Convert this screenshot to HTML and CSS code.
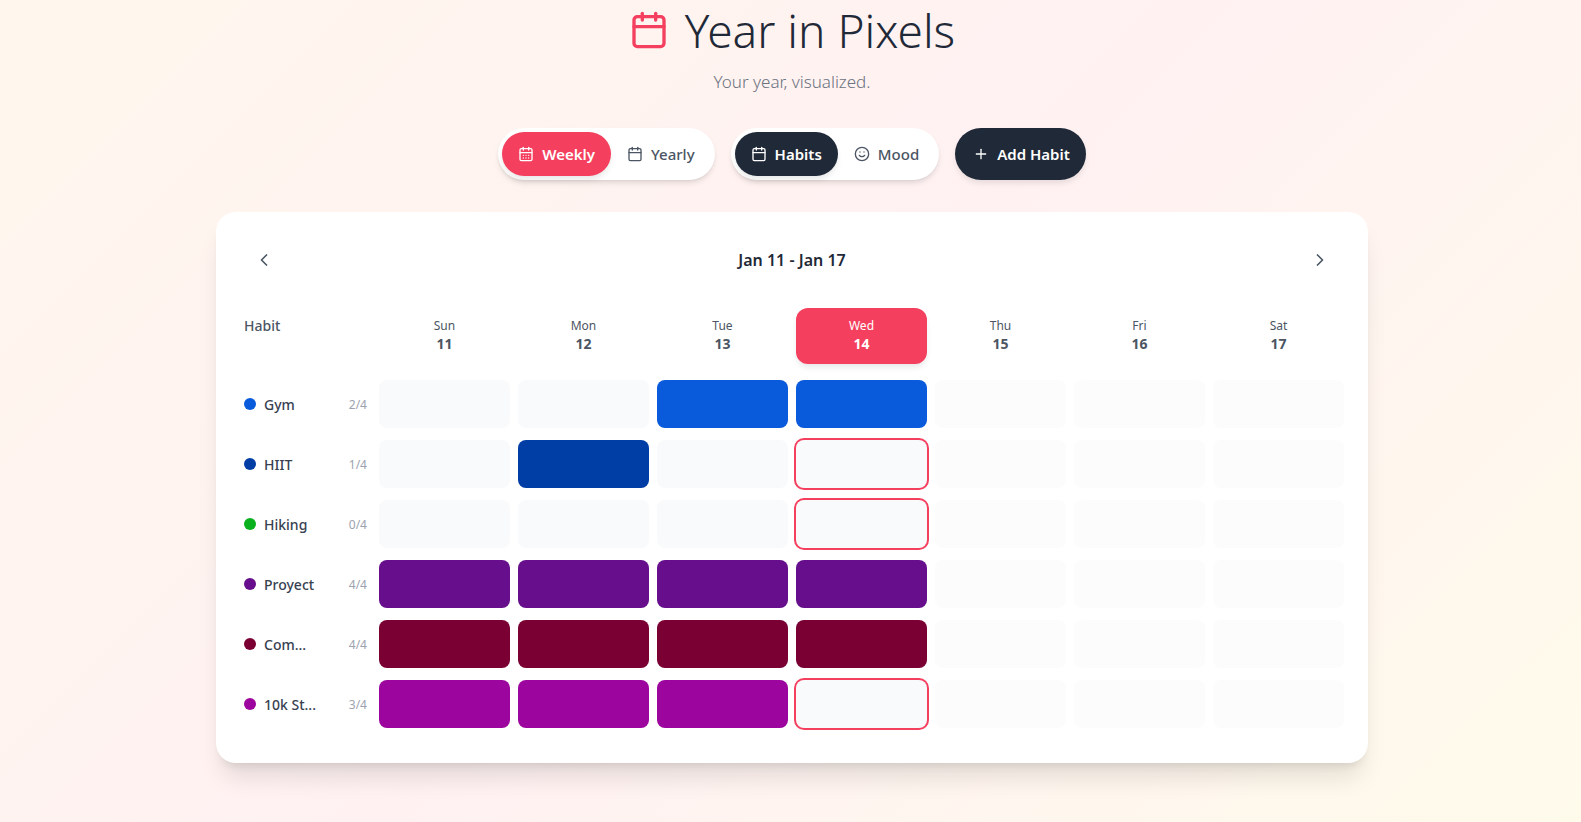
FILE: index.html
```html
<!DOCTYPE html>
<html>
<head>
    <title>Year in Pixels</title>
    <link rel="stylesheet" href="styles.css">
</head>
<body>
    <div class="container">
        <div class="header">
            <h1>
                <svg class="title-icon" viewBox="0 0 24 24"><path d="M8 2v4"/><path d="M16 2v4"/><rect x="3" y="4" width="18" height="18" rx="2"/><path d="M3 10h18"/></svg>
                Year in Pixels
            </h1>
            <p class="subtitle">Your year, visualized.</p>
        </div>

        <div class="controls">
            <div class="toggle">
                <button class="btn btn-rose">
                    <svg class="icon" viewBox="0 0 24 24"><path d="M8 2v4"/><path d="M16 2v4"/><rect x="3" y="4" width="18" height="18" rx="2"/><path d="M3 10h18"/><path d="M8 14h.01"/><path d="M12 14h.01"/><path d="M16 14h.01"/><path d="M8 18h.01"/><path d="M12 18h.01"/><path d="M16 18h.01"/></svg>
                    Weekly
                </button>
                <button class="btn">
                    <svg class="icon" viewBox="0 0 24 24"><path d="M8 2v4"/><path d="M16 2v4"/><rect x="3" y="4" width="18" height="18" rx="2"/><path d="M3 10h18"/></svg>
                    Yearly
                </button>
            </div>
            <div class="toggle">
                <button class="btn btn-dark">
                    <svg class="icon" viewBox="0 0 24 24"><path d="M8 2v4"/><path d="M16 2v4"/><rect x="3" y="4" width="18" height="18" rx="2"/><path d="M3 10h18"/></svg>
                    Habits
                </button>
                <button class="btn">
                    <svg class="icon" viewBox="0 0 24 24"><circle cx="12" cy="12" r="10"/><path d="M8 14s1.5 2 4 2 4-2 4-2"/><path d="M9 9h.01"/><path d="M15 9h.01"/></svg>
                    Mood
                </button>
            </div>
            <button class="add-btn">
                <svg class="icon" viewBox="0 0 24 24"><path d="M5 12h14"/><path d="M12 5v14"/></svg>
                Add Habit
            </button>
        </div>

        <div class="card">
            <div class="week-nav">
                <button class="nav-btn"><svg class="nav-icon" viewBox="0 0 24 24"><path d="m15 18-6-6 6-6"/></svg></button>
                <div class="week-label">Jan 11 - Jan 17</div>
                <button class="nav-btn"><svg class="nav-icon" viewBox="0 0 24 24"><path d="m9 18 6-6-6-6"/></svg></button>
            </div>

            <div class="week-table">
                <div class="row row-head">
                    <div class="habit-head">Habit</div>
                    <div class="day"><span>Sun</span><b>11</b></div>
                    <div class="day"><span>Mon</span><b>12</b></div>
                    <div class="day"><span>Tue</span><b>13</b></div>
                    <div class="day today"><span>Wed</span><b>14</b></div>
                    <div class="day"><span>Thu</span><b>15</b></div>
                    <div class="day"><span>Fri</span><b>16</b></div>
                    <div class="day"><span>Sat</span><b>17</b></div>
                </div>

                <div class="row">
                    <div class="habit"><i class="dot gym"></i><span class="name">Gym</span><span class="count">2/4</span></div>
                    <div class="cell"></div>
                    <div class="cell"></div>
                    <div class="cell gym"></div>
                    <div class="cell gym"></div>
                    <div class="cell future"></div>
                    <div class="cell future"></div>
                    <div class="cell future"></div>
                </div>
                <div class="row">
                    <div class="habit"><i class="dot hiit"></i><span class="name">HIIT</span><span class="count">1/4</span></div>
                    <div class="cell"></div>
                    <div class="cell hiit"></div>
                    <div class="cell"></div>
                    <div class="cell pending"></div>
                    <div class="cell future"></div>
                    <div class="cell future"></div>
                    <div class="cell future"></div>
                </div>
                <div class="row">
                    <div class="habit"><i class="dot hiking"></i><span class="name">Hiking</span><span class="count">0/4</span></div>
                    <div class="cell"></div>
                    <div class="cell"></div>
                    <div class="cell"></div>
                    <div class="cell pending"></div>
                    <div class="cell future"></div>
                    <div class="cell future"></div>
                    <div class="cell future"></div>
                </div>
                <div class="row">
                    <div class="habit"><i class="dot project"></i><span class="name">Proyect</span><span class="count">4/4</span></div>
                    <div class="cell project"></div>
                    <div class="cell project"></div>
                    <div class="cell project"></div>
                    <div class="cell project"></div>
                    <div class="cell future"></div>
                    <div class="cell future"></div>
                    <div class="cell future"></div>
                </div>
                <div class="row">
                    <div class="habit"><i class="dot com"></i><span class="name">Com...</span><span class="count">4/4</span></div>
                    <div class="cell com"></div>
                    <div class="cell com"></div>
                    <div class="cell com"></div>
                    <div class="cell com"></div>
                    <div class="cell future"></div>
                    <div class="cell future"></div>
                    <div class="cell future"></div>
                </div>
                <div class="row">
                    <div class="habit"><i class="dot steps"></i><span class="name">10k St...</span><span class="count">3/4</span></div>
                    <div class="cell steps"></div>
                    <div class="cell steps"></div>
                    <div class="cell steps"></div>
                    <div class="cell pending"></div>
                    <div class="cell future"></div>
                    <div class="cell future"></div>
                    <div class="cell future"></div>
                </div>
            </div>
        </div>
    </div>
</body>
</html>
```

FILE: styles.css
```css
* {
    margin: 0;
    padding: 0;
    box-sizing: border-box;
}

body {
    font-family: "Noto Sans", "Open Sans", sans-serif;
    background: linear-gradient(135deg, #fff7ed 0%, #fff1f2 50%, #fffbeb 100%);
    color: #1f2937;
    height: 100vh;
    overflow: hidden;
}

.container {
    width: 1152px;
    margin-left: 216px;
    display: flex;
    flex-direction: column;
    align-items: center;
}

.header {
    text-align: center;
    margin-bottom: 32px;
}

.header h1 {
    display: flex;
    align-items: center;
    justify-content: center;
    gap: 16px;
    font-size: 46px;
    font-weight: 300;
    line-height: 60px;
    color: #1f2937;
}

.title-icon {
    width: 40px;
    height: 40px;
    fill: none;
    stroke: #f43f5e;
    stroke-width: 2;
    stroke-linecap: round;
    stroke-linejoin: round;
}

.subtitle {
    font-size: 17px;
    font-weight: 300;
    line-height: 28px;
    color: #6b7280;
    margin-top: 8px;
}

.controls {
    display: flex;
    gap: 16px;
    margin-bottom: 32px;
}

.toggle {
    display: flex;
    padding: 4px;
    height: 52px;
    background: white;
    border-radius: 26px;
    box-shadow: 0 4px 6px -1px rgba(0,0,0,0.1), 0 2px 4px -2px rgba(0,0,0,0.1);
}

.btn, .add-btn {
    display: flex;
    align-items: center;
    gap: 8px;
    padding: 0 16px;
    border: none;
    background: none;
    font-family: inherit;
    font-size: 15px;
    font-weight: 500;
    color: #4b5563;
    border-radius: 22px;
    cursor: pointer;
}

.btn-rose {
    background: #f43f5e;
    color: white;
    font-weight: 600;
    box-shadow: 0 4px 6px -1px rgba(0,0,0,0.1);
}

.btn-dark {
    background: #1f2937;
    color: white;
    font-weight: 600;
    box-shadow: 0 4px 6px -1px rgba(0,0,0,0.1);
}

.add-btn {
    height: 52px;
    padding: 0 16px 0 18px;
    background: #1f2937;
    color: white;
    font-weight: 600;
    border-radius: 26px;
    box-shadow: 0 4px 6px -1px rgba(0,0,0,0.1);
}

.icon {
    width: 16px;
    height: 16px;
    fill: none;
    stroke: currentColor;
    stroke-width: 2;
    stroke-linecap: round;
    stroke-linejoin: round;
}

.card {
    width: 100%;
    height: 551px;
    padding: 24px 28px;
    background: white;
    border-radius: 20px;
    box-shadow: 0 20px 25px -5px rgba(0,0,0,0.1), 0 8px 10px -6px rgba(0,0,0,0.1);
}

.week-nav {
    display: flex;
    align-items: center;
    justify-content: space-between;
    height: 48px;
    margin-bottom: 24px;
}

.nav-btn {
    width: 40px;
    height: 40px;
    display: flex;
    align-items: center;
    justify-content: center;
    border: none;
    background: none;
    cursor: pointer;
}

.nav-icon {
    width: 20px;
    height: 20px;
    fill: none;
    stroke: #4b5563;
    stroke-width: 2;
    stroke-linecap: round;
    stroke-linejoin: round;
}

.week-label {
    font-size: 16px;
    font-weight: 600;
    color: #1f2937;
}

.week-table {
    margin-right: -4px;
    display: flex;
    flex-direction: column;
    gap: 12px;
}

.row {
    display: grid;
    grid-template-columns: 127px repeat(7, 1fr);
    column-gap: 8px;
    height: 48px;
}

.row-head {
    height: 56px;
    margin-bottom: 4px;
}

.habit-head {
    font-size: 14px;
    font-weight: 500;
    color: #4b5563;
    padding-top: 8px;
}

.day {
    display: flex;
    flex-direction: column;
    align-items: center;
    justify-content: center;
    border-radius: 12px;
    color: #4b5563;
}

.day span {
    font-size: 12px;
    line-height: 16px;
}

.day b {
    font-size: 14px;
    line-height: 20px;
    font-weight: 700;
}

.today {
    background: #f43f5e;
    color: white;
    box-shadow: 0 4px 6px -1px rgba(0,0,0,0.1);
}

.habit {
    display: flex;
    align-items: center;
    padding-right: 4px;
}

.dot {
    width: 12px;
    height: 12px;
    border-radius: 50%;
    margin-right: 8px;
}

.name {
    flex: 1;
    font-size: 14px;
    font-weight: 500;
    color: #374151;
}

.count {
    font-size: 12px;
    color: #9ca3af;
}

.cell {
    background: #f9fafb;
    border-radius: 8px;
}

.future {
    opacity: 0.5;
}

.pending {
    box-shadow: 0 0 0 2px #f43f5e;
}

.gym { background: #0a5bdc; }
.hiit { background: #003da5; }
.hiking { background: #0bb01e; }
.project { background: #660e8c; }
.com { background: #7a0033; }
.steps { background: #9c069e; }
```
